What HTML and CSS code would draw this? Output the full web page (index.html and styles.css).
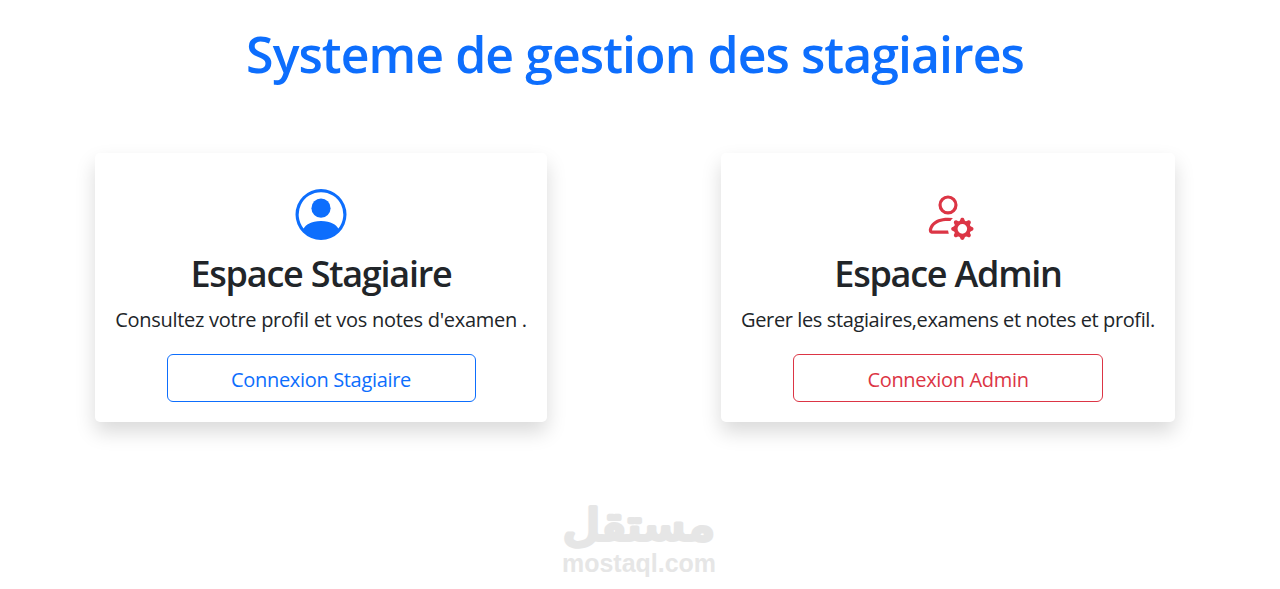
FILE: index.html
```
<!DOCTYPE html>
<html lang="fr">

<head>
  <meta charset="UTF-8" />
  <meta name="viewport" content="width=device-width, initial-scale=1.0" />
  <title>Systeme de gestion des stagiaires</title>
  <link rel="stylesheet" href="styles.css">
</head>

<body>
  <h1 class="title">Systeme de gestion des stagiaires</h1>

  <main class="cards">
    <section class="card stagiaire">
      <svg class="icon" viewBox="0 0 16 16" fill="currentColor">
        <path d="M11 6a3 3 0 1 1-6 0 3 3 0 0 1 6 0" />
        <path fill-rule="evenodd" d="M0 8a8 8 0 1 1 16 0A8 8 0 0 1 0 8m8-7a7 7 0 0 0-5.468 11.37C3.242 11.226 4.805 10 8 10s4.757 1.225 5.468 2.37A7 7 0 0 0 8 1" />
      </svg>
      <h2>Espace Stagiaire</h2>
      <p>Consultez votre profil et vos notes d'examen .</p>
      <a class="btn" href="#">Connexion Stagiaire</a>
    </section>

    <section class="card admin">
      <svg class="icon" viewBox="0 0 16 16" fill="currentColor">
        <path d="M11 5a3 3 0 1 1-6 0 3 3 0 0 1 6 0M8 7a2 2 0 1 0 0-4 2 2 0 0 0 0 4m.256 7a4.5 4.5 0 0 1-.229-1.004H3c.001-.246.154-.986.832-1.664C4.484 10.68 5.711 10 8 10q.39 0 .74.025c.226-.341.496-.65.804-.918Q8.844 9.002 8 9c-5 0-6 3-6 4s1 1 1 1zm3.63-4.54c.18-.613 1.048-.613 1.229 0l.043.148a.64.64 0 0 0 .921.382l.136-.074c.561-.306 1.175.308.87.869l-.075.136a.64.64 0 0 0 .382.92l.149.045c.612.18.612 1.048 0 1.229l-.15.043a.64.64 0 0 0-.38.921l.074.136c.305.561-.309 1.175-.87.87l-.136-.075a.64.64 0 0 0-.92.382l-.045.149c-.18.612-1.048.612-1.229 0l-.043-.15a.64.64 0 0 0-.921-.38l-.136.074c-.561.305-1.175-.309-.87-.87l.075-.136a.64.64 0 0 0-.382-.92l-.148-.044c-.613-.181-.613-1.049 0-1.23l.148-.043a.64.64 0 0 0 .382-.921l-.074-.136c-.306-.561.308-1.175.869-.87l.136.075a.64.64 0 0 0 .92-.382zM14 12.5a1.5 1.5 0 1 0-3 0 1.5 1.5 0 0 0 3 0" />
      </svg>
      <h2>Espace Admin</h2>
      <p>Gerer les stagiaires,examens et notes et profil.</p>
      <a class="btn" href="#">Connexion Admin</a>
    </section>
  </main>

  <footer>
    <svg class="mostaql" width="160" height="90" viewBox="0 -10 160 90">
      <text class="ar" x="80" y="38" text-anchor="middle" textLength="152" lengthAdjust="spacingAndGlyphs">مستقل</text>
      <text class="en" x="3" y="70" textLength="154" lengthAdjust="spacingAndGlyphs">mostaql.com</text>
    </svg>
  </footer>
</body>

</html>
```

FILE: styles.css
```
* {
  box-sizing: border-box;
}

body {
  margin: 0;
  width: 1270px;
  color: #212529;
  background-color: #fff;
  font-family: "Open Sans", "Noto Sans", sans-serif;
  text-align: center;
}

.title {
  margin: 0;
  padding-top: 24px;
  color: #0d6efd;
  font-size: 50px;
  font-weight: 570;
  letter-spacing: -0.95px;
  line-height: 60px;
}

.cards {
  display: flex;
  justify-content: center;
  gap: 174px;
  margin-top: 69px;
}

.card {
  display: flex;
  flex-direction: column;
  align-items: center;
  width: 452px;
  height: 269px;
  padding: 36px 20px 20px;
  border-radius: 5px;
  box-shadow: 0 10px 20px rgba(0, 0, 0, 0.15);
}

.icon {
  width: 52px;
  height: 51px;
}

.card h2 {
  margin: 12px 0 0;
  font-size: 36px;
  font-weight: 570;
  letter-spacing: -1.25px;
  line-height: 43px;
  white-space: nowrap;
}

.card p {
  margin: 10px 0 19px;
  font-size: 20px;
  letter-spacing: -0.28px;
  line-height: 30px;
  white-space: nowrap;
}

.btn {
  width: 75%;
  height: 48px;
  border: 1px solid;
  border-radius: 6px;
  font-size: 20px;
  letter-spacing: -0.33px;
  line-height: 49px;
  text-decoration: none;
}

.stagiaire .icon,
.stagiaire .btn {
  color: #0d6efd;
}

.admin {
  width: 454px;
}

.admin p {
  letter-spacing: -0.38px;
}

.admin .icon,
.admin .btn {
  color: #dc3545;
}

footer {
  margin-top: 70px;
  padding-left: 8px;
}

.mostaql {
  display: block;
  margin: 0 auto;
  overflow: visible;
  fill: #e6e6e6;
}

.ar {
  font-family: "DejaVu Sans", sans-serif;
  font-size: 43px;
  stroke: #e6e6e6;
  stroke-width: 4px;
  stroke-linejoin: round;
}

.en {
  font-family: "Liberation Sans", sans-serif;
  font-size: 25px;
  font-weight: bold;
}
```
